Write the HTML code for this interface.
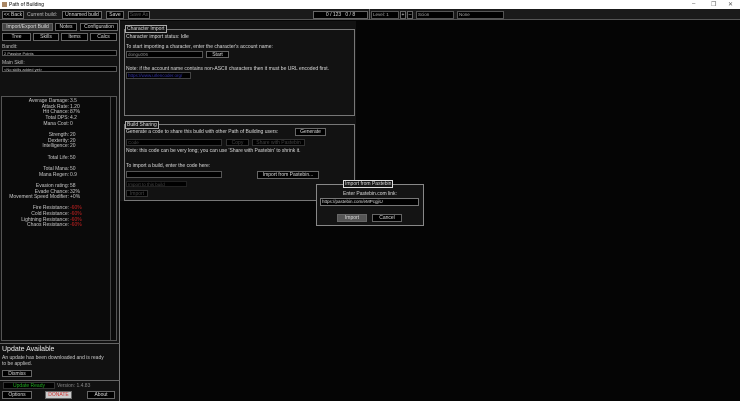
<!DOCTYPE html>
<html><head><style>
*{margin:0;padding:0;box-sizing:border-box}
body{width:740px;height:401px;background:#050505;font-family:"Liberation Sans",sans-serif;font-size:5px;color:#ddd;position:relative;overflow:hidden}
.a{position:absolute;white-space:nowrap}
.btn{position:absolute;border:1px solid #666;background:#000;color:#ddd;text-align:center;font-size:5px;line-height:6px}
.box{position:absolute;border:1px solid #777}
.in{position:absolute;border:1px solid #555;background:#000;color:#888;font-size:4.5px;line-height:5px;padding-left:1px}
.r{text-align:right}
</style></head><body>
<div class="a" style="left:0;top:0;width:740px;height:9px;background:#fff"></div>
<div class="a" style="left:2px;top:2px;width:5px;height:5px;background:#a86"></div>
<div class="a" style="left:9px;top:2px;color:#000;font-size:5px">Path of Building</div>
<div class="a" style="left:692px;top:1px;color:#555;font-size:6px">–</div>
<div class="a" style="left:711px;top:1px;color:#555;font-size:6px">❐</div>
<div class="a" style="left:728px;top:1px;color:#555;font-size:6px">✕</div>
<div class="a" style="left:0;top:9px;width:740px;height:11px;background:#1a1a1a;border-bottom:1px solid #555"></div>
<div class="btn" style="left:2px;top:11px;width:22px;height:8px">&lt;&lt; Back</div>
<div class="a" style="left:27px;top:12px;color:#bbb">Current build:</div>
<div class="btn" style="left:62px;top:11px;width:40px;height:8px">Unnamed build</div>
<div class="btn" style="left:106px;top:11px;width:18px;height:8px">Save</div>
<div class="btn" style="left:128px;top:11px;width:22px;height:8px;color:#555">Save As</div>
<div class="btn" style="left:313px;top:11px;width:55px;height:8px">0 / 123 &nbsp; 0 / 8</div>
<div class="a" style="left:369px;top:9px;width:1px;height:11px;background:#666"></div>
<div class="in" style="left:371px;top:11px;width:28px;height:8px;color:#aaa">Level: 1</div>
<div class="btn" style="left:400px;top:11px;width:6px;height:8px">+</div>
<div class="btn" style="left:407px;top:11px;width:6px;height:8px">–</div>
<div class="in" style="left:416px;top:11px;width:38px;height:8px;color:#aaa">Scion</div>
<div class="in" style="left:457px;top:11px;width:47px;height:8px;color:#aaa">None</div>
<div class="a" style="left:0;top:20px;width:120px;height:381px;background:#111;border-right:1px solid #777"></div>
<div class="btn" style="left:2px;top:23px;width:51px;height:8px;background:#444">Import/Export Build</div>
<div class="btn" style="left:55px;top:23px;width:22px;height:8px">Notes</div>
<div class="btn" style="left:80px;top:23px;width:38px;height:8px">Configuration</div>
<div class="btn" style="left:2px;top:33px;width:29px;height:8px">Tree</div>
<div class="btn" style="left:33px;top:33px;width:26px;height:8px">Skills</div>
<div class="btn" style="left:61px;top:33px;width:27px;height:8px">Items</div>
<div class="btn" style="left:90px;top:33px;width:27px;height:8px">Calcs</div>
<div class="a" style="left:2px;top:44px;color:#bbb">Bandit:</div>
<div class="in" style="left:2px;top:50px;width:115px;height:6px;color:#ccc;font-size:4px">2 Passive Points</div>
<div class="a" style="left:2px;top:60px;color:#bbb">Main Skill:</div>
<div class="in" style="left:2px;top:66px;width:115px;height:6px;color:#ccc;font-size:4px">&lt;No skills added yet&gt;</div>
<div class="a" style="left:1px;top:96px;width:116px;height:245px;border:1px solid #555;background:#0a0a0a"></div>
<div class="a" style="left:110px;top:97px;width:6px;height:243px;border-left:1px solid #444"></div>
<div class="a r" style="left:0;top:99px;width:69px;line-height:5.65px;color:#ccc">Average Damage:<br>Attack Rate:<br>Hit Chance:<br>Total DPS:<br>Mana Cost:<br><br>Strength:<br>Dexterity:<br>Intelligence:<br><br>Total Life:<br><br>Total Mana:<br>Mana Regen:<br><br>Evasion rating:<br>Evade Chance:<br>Movement Speed Modifier:<br><br>Fire Resistance:<br>Cold Resistance:<br>Lightning Resistance:<br>Chaos Resistance:</div>
<div class="a" style="left:70px;top:99px;line-height:5.65px;color:#ccc">3.5<br>1.20<br>87%<br>4.2<br>0<br><br>20<br>20<br>20<br><br>50<br><br>50<br>0.9<br><br>58<br>32%<br>+0%<br><br><span style="color:#c22">-60%</span><br><span style="color:#c22">-60%</span><br><span style="color:#c22">-60%</span><br><span style="color:#c22">-60%</span></div>
<div class="a" style="left:0;top:343px;width:120px;height:1px;background:#666"></div>
<div class="a" style="left:2px;top:346px;font-size:7px;color:#eee">Update Available</div>
<div class="a" style="left:2px;top:355px;color:#ccc;line-height:6px">An update has been downloaded and is ready<br>to be applied.</div>
<div class="btn" style="left:2px;top:370px;width:30px;height:7px">Dismiss</div>
<div class="a" style="left:0;top:380px;width:120px;height:1px;background:#666"></div>
<div class="btn" style="left:3px;top:382px;width:52px;height:7px;color:#2a2;border-color:#333">Update Ready</div>
<div class="a" style="left:57px;top:383px;color:#888">Version: 1.4.83</div>
<div class="btn" style="left:2px;top:391px;width:30px;height:8px">Options</div>
<div class="btn" style="left:45px;top:391px;width:27px;height:8px;background:#ccc;color:#c33">DONATE</div>
<div class="btn" style="left:87px;top:391px;width:28px;height:8px">About</div>
<div class="a" style="left:120px;top:21px;width:236px;height:180px;background:#121212"></div>
<div class="box" style="left:124px;top:29px;width:231px;height:87px"></div>
<div class="a" style="left:125px;top:25px;background:#121212;border:1px solid #aaa;padding:0 1px">Character Import</div>
<div class="a" style="left:126px;top:34px">Character import status: Idle</div>
<div class="a" style="left:126px;top:44px">To start importing a character, enter the character's account name:</div>
<div class="in" style="left:126px;top:51px;width:77px;height:7px;color:#888">dongu006</div>
<div class="btn" style="left:206px;top:51px;width:23px;height:7px">Start</div>
<div class="a" style="left:126px;top:66px">Note: if the account name contains non-ASCII characters then it must be URL encoded first.</div>
<div class="in" style="left:126px;top:72px;width:65px;height:7px;color:#33a;border-color:#444">https://www.urlencoder.org/</div>
<div class="box" style="left:124px;top:124px;width:231px;height:77px"></div>
<div class="a" style="left:125px;top:121px;background:#121212;border:1px solid #aaa;padding:0 1px">Build Sharing</div>
<div class="a" style="left:126px;top:129px">Generate a code to share this build with other Path of Building users:</div>
<div class="btn" style="left:295px;top:128px;width:31px;height:8px">Generate</div>
<div class="in" style="left:126px;top:139px;width:96px;height:7px;color:#444;border-color:#333">Code</div>
<div class="btn" style="left:226px;top:139px;width:23px;height:7px;color:#444;border-color:#333">Copy</div>
<div class="btn" style="left:252px;top:139px;width:53px;height:7px;color:#444;border-color:#333">Share with Pastebin</div>
<div class="a" style="left:126px;top:148px">Note: this code can be very long; you can use 'Share with Pastebin' to shrink it.</div>
<div class="a" style="left:126px;top:163px">To import a build, enter the code here:</div>
<div class="in" style="left:126px;top:171px;width:96px;height:7px"></div>
<div class="btn" style="left:257px;top:171px;width:62px;height:8px">Import from Pastebin...</div>
<div class="in" style="left:126px;top:181px;width:61px;height:6px;color:#444;border-color:#222">Import to this build</div>
<div class="btn" style="left:126px;top:190px;width:22px;height:7px;color:#444;border-color:#333">Import</div>
<div class="a" style="left:316px;top:184px;width:108px;height:42px;background:#141414;border:1px solid #888"></div>
<div class="a" style="left:343px;top:180px;background:#141414;border:1px solid #ddd;padding:0 1px">Import from Pastebin</div>
<div class="a" style="left:316px;top:191px;width:108px;text-align:center">Enter Pastebin.com link:</div>
<div class="in" style="left:320px;top:198px;width:99px;height:8px;color:#ddd;border-color:#777;line-height:6px">https://pastebin.com/eMPcgjiU</div>
<div class="btn" style="left:337px;top:214px;width:30px;height:8px;background:#555">Import</div>
<div class="btn" style="left:372px;top:214px;width:30px;height:8px">Cancel</div>
</body></html>
